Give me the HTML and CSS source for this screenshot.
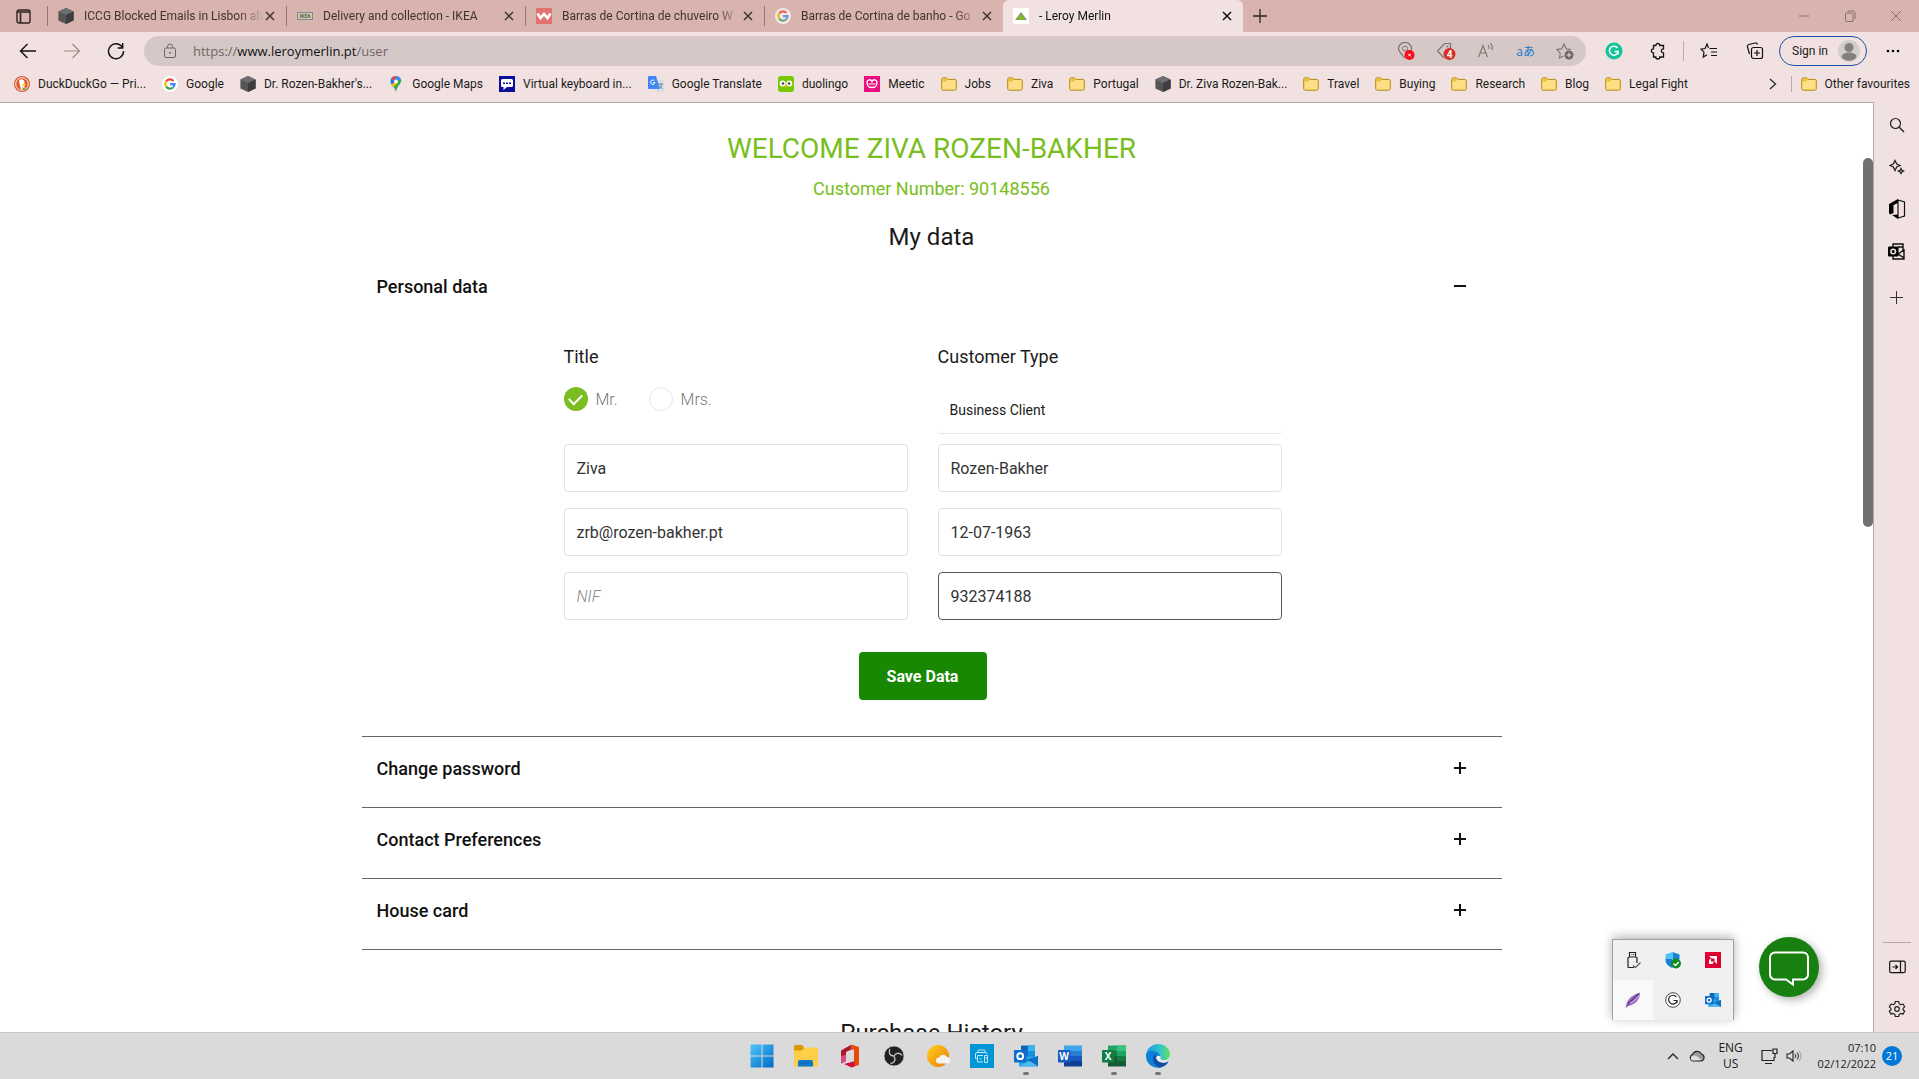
FILE: index.html
```html
<!DOCTYPE html>
<html lang="en">
<head>
<title>- Leroy Merlin</title>
<meta charset="UTF-8">
<meta name="viewport" content="width=device-width, initial-scale=1">
<link rel="stylesheet" href="styles.css">
</head>

<body>
    <!-- shared icons -->
    <svg class="defs" aria-hidden="true">
      <symbol id="folder" viewBox="0 0 16 16"><path d="M.7 3.500a1.600 1.600 0 0 1 1.600-1.700h3.200l1.600 1.600h6.600a1.600 1.600 0 0 1 1.600 1.600v7.600a1.600 1.600 0 0 1-1.600 1.600H2.300a1.600 1.600 0 0 1-1.600-1.600z" fill="#ffdf85" stroke="#b58a0f"/><path d="M1.200 5.600V3.400a1 1 0 0 1 1-1.100h3l1.300 1.500-1.600 1.800z" fill="#eac03a"/></symbol>
      <symbol id="cube" viewBox="0 0 16 16"><path d="M8 0l7.600 3.400v9L8 16 .4 12.400v-9z" fill="#555"/><path d="M8 0l7.600 3.400L8 7 .4 3.400z" fill="#6d6e70"/><path d="M8 7l7.600-3.600v9L8 16z" fill="#3c3d3f"/></symbol>
      <symbol id="google" viewBox="0 0 16 16"><circle cx="8" cy="8" r="8" fill="#fff"/><g fill="none" stroke-width="2.200"><path d="M4.200 5.400A4.600 4.600 0 0 1 11.400 4.900" stroke="#ea4335"/><path d="M4.200 10.600a4.600 4.600 0 0 1 0-5.200" stroke="#fbbc05"/><path d="M11 11.500a4.600 4.600 0 0 1-6.800-.9" stroke="#34a853"/><path d="M8 8.100h4.600a4.600 4.600 0 0 1-1.600 3.400" stroke="#4285f4"/></g></symbol>
      <symbol id="close" viewBox="0 0 10 10"><path d="M1 1l8 8M9 1L1 9" stroke="currentColor" stroke-width="1.500"/></symbol>
      <symbol id="outlook" viewBox="0 0 24 24"><path d="M7 1.500h14v9H7z" fill="#1066b5"/><path d="M14 1.500h7v6h-7z" fill="#35b8f1"/><path d="M7 7.500h7v6H7z" fill="#0f78d4"/><path d="M14 7.500h7v6h-7z" fill="#1490df"/><path d="M5 12l18.500 1v9.500H5z" fill="#28a8ea"/><path d="M24 12v10.500L12 16z" fill="#1a73c0"/><path d="M5 22.500L23 13v9.500z" fill="#50b9f0"/><path d="M24 12v10L14 16z" fill="#0f6fc0"/><rect y="6" width="12.500" height="12.500" rx="1" fill="#0f6cc8"/><circle cx="6.200" cy="12.200" r="2.900" fill="none" stroke="#fff" stroke-width="2"/></symbol>
    </svg>

    <!-- tab strip -->
    <div class="tabstrip">
      <button class="tab-actions" aria-label="Tab actions"><svg width="15" height="15" viewBox="0 0 15 15"><rect x="1" y="1" width="13" height="13" rx="2" fill="none" stroke="#2b2220" stroke-width="1.400"/><path d="M1 3h13M4.500 4v10" stroke="#2b2220" stroke-width="1.600"/></svg></button>
      <div class="tab"><svg class="ico"><use href="#cube"/></svg><span>ICCG Blocked Emails in Lisbon ab</span><button aria-label="Close tab"><svg width="10" height="10"><use href="#close"/></svg></button></div>
      <div class="tab"><svg class="ico" viewBox="0 0 16 16"><rect x=".5" y="4.500" width="15" height="7" fill="#e6c77c" stroke="#6d8cb5"/><text x="8" y="10" class="ikea">IKEA</text></svg><span>Delivery and collection - IKEA</span><button aria-label="Close tab"><svg width="10" height="10"><use href="#close"/></svg></button></div>
      <div class="tab"><svg class="ico" viewBox="0 0 16 16"><path fill="#e0736e" d="M0 0h16v16H0z"/><path d="M1.500 5.500l3 4.500L8 6l3.500 4 3-4.500" fill="none" stroke="#fff" stroke-width="2.600"/></svg><span>Barras de Cortina de chuveiro W</span><button aria-label="Close tab"><svg width="10" height="10"><use href="#close"/></svg></button></div>
      <div class="tab"><svg class="ico faded"><use href="#google"/></svg><span>Barras de Cortina de banho - Go</span><button aria-label="Close tab"><svg width="10" height="10"><use href="#close"/></svg></button></div>
      <div class="tab active"><svg class="ico" viewBox="0 0 16 16"><path fill="#fff" d="M0 0h16v16H0z"/><path d="M8 4l6 8H2z" fill="#8a8f7c"/><path d="M8 6l4.500 5.500h-9z" fill="#78be20"/></svg><span>- Leroy Merlin</span><button aria-label="Close tab"><svg width="10" height="10"><use href="#close"/></svg></button></div>
      <button class="new-tab" aria-label="New tab"><svg width="14" height="14" viewBox="0 0 14 14"><path d="M7 0v14M0 7h14" stroke="#2b2220" stroke-width="1.300"/></svg></button>
      <div class="window-buttons">
        <button aria-label="Minimise"><svg width="12" height="12" viewBox="0 0 12 12"><path d="M1 6h10" stroke="#85706c"/></svg></button>
        <button aria-label="Restore"><svg width="12" height="12" viewBox="0 0 12 12"><path d="M1.500 4a1 1 0 0 1 1-1H8a1 1 0 0 1 1 1v6.500a1 1 0 0 1-1 1H2.500a1 1 0 0 1-1-1zM3.500 1H9a2 2 0 0 1 2 2v6" fill="none" stroke="#85706c"/></svg></button>
        <button aria-label="Close"><svg width="12" height="12" viewBox="0 0 12 12"><path d="M1 1l10 10M11 1L1 11" stroke="#85706c"/></svg></button>
      </div>
    </div>

    <!-- address bar -->
    <div class="toolbar">
      <div class="nav-buttons">
        <button aria-label="Back"><svg width="18" height="16" viewBox="0 0 18 16"><path d="M17 8H2M8.500 1L1.500 8l7 7" fill="none" stroke="#111" stroke-width="1.400"/></svg></button>
        <button aria-label="Forward"><svg width="18" height="16" viewBox="0 0 18 16"><path d="M1 8h15M9.500 1l7 7-7 7" fill="none" stroke="#9b8b8a" stroke-width="1.200"/></svg></button>
        <button aria-label="Refresh"><svg width="18" height="18" viewBox="0 0 18 18"><path d="M15.500 5.500A7.500 7.500 0 1 0 16.500 9M15.700 1v5h-5" fill="none" stroke="#111" stroke-width="1.400"/></svg></button>
      </div>
      <div class="address">
        <svg width="14" height="16" viewBox="0 0 14 16"><rect x="1.500" y="5" width="11" height="9.500" rx="1.500" fill="none" stroke="#6f6564"/><path d="M4.500 5V3.500a2.500 2.500 0 0 1 5 0V5" fill="none" stroke="#6f6564"/><circle cx="7" cy="9.800" r="1" fill="#6f6564"/></svg>
        <a class="url" href="#">https://<b>www.leroymerlin.pt</b>/user</a>
        <div class="address-icons">
          <button aria-label="Location blocked"><svg width="18" height="18" viewBox="0 0 18 18"><path d="M8 16C4 12 1.500 9.500 1.500 6.500a6.500 6 0 0 1 13 0c0 1.500-.5 2.500-1.500 4" fill="none" stroke="#81716f" stroke-width="1.200"/><circle cx="8" cy="6.500" r="2.500" fill="none" stroke="#81716f"/><circle cx="12.500" cy="13" r="5" fill="#f80a14"/><path d="M11 11.500l3 3m0-3l-3 3" stroke="#fff"/></svg></button>
          <button aria-label="Shopping"><svg width="20" height="18" viewBox="0 0 20 18"><path d="M14.500 8V1.500H8.500L1.500 9l6.500 7" fill="none" stroke="#81716f" stroke-width="1.200"/><circle cx="11.500" cy="4.500" r="1" fill="#81716f"/><circle cx="13.500" cy="12" r="6" fill="#d92d20"/><text x="13.500" y="15.500" class="badge-text">4</text></svg></button>
          <button aria-label="Read aloud"><svg width="18" height="18" viewBox="0 0 18 18"><path d="M1.500 15L6 3.500 10.500 15M3 11h6M11 3a5 5 0 0 1 1 4M13.500 1a8 8 0 0 1 1.500 7" fill="none" stroke="#81716f" stroke-width="1.100"/></svg></button>
          <button class="translate" aria-label="Translate">aあ</button>
          <button aria-label="Add to favourites"><svg width="18" height="18" viewBox="0 0 18 18"><path d="M7.500 14L3.500 16l.8-4.700L1 7.500l4.700-.6L8 2l2.300 4.900 4.700.6" fill="none" stroke="#81716f" stroke-width="1.100"/><circle cx="13" cy="13" r="4.500" fill="#6f6564"/><path d="M13 10.500v5M10.500 13h5" stroke="#e8dedd"/></svg></button>
        </div>
      </div>
      <div class="tools">
        <button aria-label="Grammarly"><svg width="18" height="18" viewBox="0 0 18 18"><circle cx="9" cy="9" r="8.500" fill="#15c39a"/><path d="M12.500 6A4.500 4.500 0 1 0 13 10.500M9.500 9.500H13v3" fill="none" stroke="#fff" stroke-width="1.500"/></svg></button>
        <button aria-label="Extensions"><svg width="18" height="18" viewBox="0 0 18 18"><path d="M4.500 3.500h2.300a2 2 0 0 1 4 0h3.700v3.300a2.100 2.100 0 0 0 0 4.200V15h-3.700a2 2 0 0 1-4 0H4.500v-4a2.100 2.100 0 0 1 0-4.200z" fill="none" stroke="#111" stroke-width="1.300"/></svg></button>
        <button class="divided" aria-label="Favourites"><svg width="18" height="18" viewBox="0 0 18 18"><path d="M9.500 6.500H17M11 10h6M11 13.500h6M8.500 6L7 2 5 6.500l-4 .6 3 3L3.300 15 7 12.700" fill="none" stroke="#111" stroke-width="1.200"/></svg></button>
        <button aria-label="Collections"><svg width="18" height="18" viewBox="0 0 18 18"><rect x="5.500" y="5.500" width="11" height="11" rx="2" fill="none" stroke="#111" stroke-width="1.200"/><path d="M11 8v6M8 11h6M3.500 12L1.500 5a2 2 0 0 1 1.500-2.500L9 1a2 2 0 0 1 2.500 1.500" fill="none" stroke="#111" stroke-width="1.200"/></svg></button>
      </div>
      <button class="sign-in">Sign in <svg width="22" height="22" viewBox="0 0 22 22"><circle cx="11" cy="11" r="11" fill="#d1cecb"/><circle cx="11" cy="7.500" r="4.500" fill="#84807d"/><path d="M3.500 17c0-6 15-6 15 0-3 5-12 5-15 0z" fill="#84807d"/></svg></button>
      <button class="more" aria-label="Settings and more"><svg width="14" height="4" viewBox="0 0 14 4"><circle cx="2" cy="2" r="1.300"/><circle cx="7" cy="2" r="1.300"/><circle cx="12" cy="2" r="1.300"/></svg></button>
    </div>

    <!-- favourites bar -->
    <div class="favourites">
      <a href="#"><svg class="ico" viewBox="0 0 16 16"><circle cx="8" cy="8" r="8" fill="#de5833"/><circle cx="8" cy="8" r="6.300" fill="none" stroke="#fff" stroke-width=".9"/><path d="M5 5c1-3 6-2 5.500 2v6.500H7z" fill="#fff"/><path d="M8.500 8h4l-2 2h-2z" fill="#fdd20a"/><path d="M8 11l4 2-3 1.500z" fill="#4cba3c"/></svg>DuckDuckGo — Pri...</a>
      <a href="#"><svg class="ico"><use href="#google"/></svg>Google</a>
      <a href="#"><svg class="ico"><use href="#cube"/></svg>Dr. Rozen-Bakher's...</a>
      <a href="#"><svg class="ico" viewBox="0 0 16 16"><path d="M3 2.500A5.500 5.500 0 0 1 8 0v6z" fill="#ea4335"/><path d="M8 0a5.500 5.500 0 0 1 5 3L7 9 6 6z" fill="#4285f4"/><path d="M2.500 6a5.500 5.500 0 0 1 .8-3.700L7 5.500 3.800 9z" fill="#1a73e8"/><path d="M3.500 9L13 3c1.500 4-3.700 6-5 13-.8-3.500-2.500-5-4.500-7z" fill="#34a853"/><path d="M3.500 9l4.200-4.500L9.500 7 5.500 11z" fill="#fbbc04"/><circle cx="8" cy="5.500" r="1.900" fill="#fff"/></svg>Google Maps</a>
      <a href="#"><svg class="ico" viewBox="0 0 16 16"><path fill="#0a0f9b" d="M0 0h16v16H0z"/><path d="M3.500 3h9a1.500 1.500 0 0 1 1.500 1.500v5a1.500 1.500 0 0 1-1.500 1.500H8l-3.500 3V11h-1A1.500 1.500 0 0 1 2 9.500v-5A1.500 1.500 0 0 1 3.500 3z" fill="#fff"/><path d="M4 6.500h2v1.500H4zM7 6.500h2v1.500H7zM10 6.500h2v1.500h-2z" fill="#0a0f9b"/></svg>Virtual keyboard in...</a>
      <a href="#"><svg class="ico" viewBox="0 0 16 16"><path d="M6 4h9a1 1 0 0 1 1 1v10a1 1 0 0 1-1 1H9z" fill="#d9dde3"/><path d="M1 0h7l4 13H1a1 1 0 0 1-1-1V1a1 1 0 0 1 1-1z" fill="#4285f4"/><path d="M6.500 4.800A2.200 2.200 0 1 0 7 6.500H5" fill="none" stroke="#fff"/><path d="M10 8h5M12.500 7v1M14 8c0 2-2 4-3 4.500M11.500 9.500l3 3.500" fill="none" stroke="#6a8aa0"/></svg>Google Translate</a>
      <a href="#"><svg class="ico" viewBox="0 0 16 16"><rect width="16" height="16" rx="3" fill="#78c800"/><circle cx="4.700" cy="7.500" r="3" fill="#fff"/><circle cx="11.300" cy="7.500" r="3" fill="#fff"/><circle cx="5" cy="7.500" r="1.300" fill="#444"/><circle cx="11" cy="7.500" r="1.300" fill="#444"/><path d="M6.500 9.500h3L8 12z" fill="#f5a623"/></svg>duolingo</a>
      <a href="#"><svg class="ico" viewBox="0 0 16 16"><path fill="#ea0f7d" d="M0 0h16v16H0z"/><path d="M3 7c0 6 10 6 10 0 0-4-4-4-5-1.500C7 3 3 3 3 7z" fill="none" stroke="#fff" stroke-width="1.300"/><path d="M4.500 8h7" stroke="#fff"/></svg>Meetic</a>
      <a href="#"><svg class="ico"><use href="#folder"/></svg>Jobs</a>
      <a href="#"><svg class="ico"><use href="#folder"/></svg>Ziva</a>
      <a href="#"><svg class="ico"><use href="#folder"/></svg>Portugal</a>
      <a href="#"><svg class="ico"><use href="#cube"/></svg>Dr. Ziva Rozen-Bak...</a>
      <a href="#"><svg class="ico"><use href="#folder"/></svg>Travel</a>
      <a href="#"><svg class="ico"><use href="#folder"/></svg>Buying</a>
      <a href="#"><svg class="ico"><use href="#folder"/></svg>Research</a>
      <a href="#"><svg class="ico"><use href="#folder"/></svg>Blog</a>
      <a href="#"><svg class="ico"><use href="#folder"/></svg>Legal Fight</a>
      <div class="favourites-end">
        <button aria-label="More favourites"><svg width="8" height="12" viewBox="0 0 8 12"><path d="M1 1l5.500 5L1 11" fill="none" stroke="#333" stroke-width="1.400"/></svg></button>
        <a href="#"><svg class="ico"><use href="#folder"/></svg>Other favourites</a>
      </div>
    </div>

    <div class="browser">
      <div class="page">
        <main class="container">
          <h1>WELCOME ZIVA ROZEN-BAKHER</h1>
          <p class="customer">Customer Number: 90148556</p>
          <h2>My data</h2>

          <section class="panel">
            <h3><button class="panel-title">Personal data <svg width="14" height="14" viewBox="0 0 14 14"><path d="M1 7h12" stroke="#111" stroke-width="2"/></svg></button></h3>
            <form class="data-form">
              <fieldset>
                <legend>Title</legend>
                <div class="radios">
                  <label><input type="radio" name="title" checked> Mr.</label>
                  <label><input type="radio" name="title"> Mrs.</label>
                </div>
              </fieldset>
              <div class="type">
                <label for="type">Customer Type</label>
                <select id="type"><option>Business Client</option></select>
              </div>
              <input type="text" aria-label="First name" value="Ziva">
              <input type="text" aria-label="Surname" value="Rozen-Bakher">
              <input type="text" aria-label="Email" value="zrb@rozen-bakher.pt">
              <input type="text" aria-label="Birth date" value="12-07-1963">
              <input type="text" aria-label="NIF" placeholder="NIF">
              <input type="text" aria-label="Phone" class="current" value="932374188">
              <button class="save" type="button">Save Data</button>
            </form>
          </section>
          <section class="panel">
            <h3><button class="panel-title">Change password <svg width="14" height="14" viewBox="0 0 14 14"><path d="M1 7h12M7 1v12" stroke="#111" stroke-width="2"/></svg></button></h3>
          </section>
          <section class="panel">
            <h3><button class="panel-title">Contact Preferences <svg width="14" height="14" viewBox="0 0 14 14"><path d="M1 7h12M7 1v12" stroke="#111" stroke-width="2"/></svg></button></h3>
          </section>
          <section class="panel">
            <h3><button class="panel-title">House card <svg width="14" height="14" viewBox="0 0 14 14"><path d="M1 7h12M7 1v12" stroke="#111" stroke-width="2"/></svg></button></h3>
          </section>

          <h2 class="history">Purchase History</h2>
        </main>
        <div class="scrollbar"></div>
        <button class="chat" aria-label="Chat"><svg width="40" height="36" viewBox="0 0 40 36"><path d="M6 1.500h28a5 5 0 0 1 5 5v17a5 5 0 0 1-5 5H24v5l-7-5H6a5 5 0 0 1-5-5v-17a5 5 0 0 1 5-5z" fill="none" stroke="#fff" stroke-width="2"/></svg></button>
        <!-- hidden tray icons -->
        <div class="tray-popup">
          <button aria-label="USB"><svg width="16" height="18" viewBox="0 0 16 18"><path d="M4.500 6V1.500h6V6M3 16.500V7a1 1 0 0 1 1-1h7a1 1 0 0 1 1 1v5M3 16.500h6" fill="none" stroke="#222" stroke-width="1.200"/><path d="M6.500 3.500h.8M8.200 3.500H9" stroke="#222"/><path d="M8 14.500l2.500 2 5-5" fill="none" stroke="#555" stroke-width="1.200"/></svg></button>
          <button aria-label="Security"><svg width="16" height="17" viewBox="0 0 16 17"><path d="M7.500 0v16c-3-1-7-4-7-8V7h14V2.500z" fill="#1581d8"/><path d="M7.500 7h7v1c0 4-4 7-7 8z" fill="#4db4ee"/><path d="M.5 2.500L7.500 0v7h-7z" fill="#50c4f5"/><circle cx="11" cy="11.500" r="5" fill="#128a22"/><path d="M8.500 11.500l2 2 3.300-3.500" fill="none" stroke="#fff" stroke-width="1.300"/></svg></button>
          <button aria-label="AMD"><svg width="16" height="16" viewBox="0 0 16 16"><path fill="#dd0031" d="M0 0h16v16H0z"/><path d="M4 4h8v8L9.500 9.500v-3h-3zM4 8l2-1.500v3h3L7.500 12H4z" fill="#fff"/></svg></button>
          <button class="lit" aria-label="Feather"><svg width="16" height="16" viewBox="0 0 16 16"><path d="M1 15C1 8 7 3 15 .5 15 8 10 13 2.500 14z" fill="#9a6cc4"/><path d="M1 15.500C5 10 9 6 14 2M3 11c4-3 6-5 10-9" fill="none" stroke="#4f2a78" stroke-width=".9"/><path d="M5 11c4-1 6-4 9-8" fill="none" stroke="#d9c3ee" stroke-width=".9"/></svg></button>
          <button aria-label="Grammarly"><svg width="16" height="16" viewBox="0 0 16 16"><circle cx="8" cy="8" r="7.300" fill="#fff" stroke="#333" stroke-width=".9"/><path d="M11.500 5A4.400 4.400 0 1 0 12 9.500M8.500 8.500H12V11" fill="none" stroke="#222" stroke-width="1.200"/></svg></button>
          <button aria-label="Outlook"><svg width="16" height="16"><use href="#outlook"/></svg></button>
        </div>
      </div>

      <aside class="sidebar">
        <button aria-label="Search"><svg width="16" height="16" viewBox="0 0 16 16"><circle cx="6.500" cy="6.500" r="5" fill="none" stroke="#222" stroke-width="1.200"/><path d="M10.200 10.200L15 15" stroke="#222" stroke-width="1.400"/></svg></button>
        <button aria-label="Discover"><svg width="16" height="16" viewBox="0 0 16 16"><path d="M6 1.500L7.700 5 11 6.500 7.700 8 6 11.500 4.300 8 1 6.500 4.300 5zM12 9.500l.9 1.700 1.700.9-1.700.9L12 14.500l-.9-1.500-1.700-.9 1.700-.9z" fill="none" stroke="#222" stroke-width="1.300"/></svg></button>
        <button aria-label="Office"><svg width="18" height="20" viewBox="0 0 18 20"><path d="M10 1l6.500 2v14L10 19z" fill="none" stroke="#111" stroke-width="1.200"/><path d="M10 0v4L5.500 6v8L2 15.500 1 14V5zM4 16l6-.5V20z" fill="#000"/></svg></button>
        <button aria-label="Outlook"><svg width="17" height="17" viewBox="0 0 17 17"><path d="M5 4V1h10v6M5 13v3h11V7l-6 4 6 4M10 4h5" fill="none" stroke="#111" stroke-width="1.400"/><rect y="3.500" width="10.500" height="10" rx="1"/><circle cx="5.200" cy="8.500" r="2.300" fill="none" stroke="#f1e2e1" stroke-width="1.500"/></svg></button>
        <button class="add" aria-label="Add"><svg width="13" height="13" viewBox="0 0 13 13"><path d="M6.500 0v13M0 6.500h13" stroke="#333"/></svg></button>
        <div class="sidebar-end">
          <button aria-label="Hide sidebar"><svg width="17" height="14" viewBox="0 0 17 14"><rect x=".7" y="1.200" width="15.500" height="11.500" rx="1.500" fill="none" stroke="#111" stroke-width="1.200"/><path d="M11.500 1v12M3.500 7h5M6.500 5l2 2-2 2" fill="none" stroke="#111" stroke-width="1.200"/></svg></button>
          <button aria-label="Settings"><svg width="18" height="18" viewBox="0 0 18 18"><path d="M7.300 1.500h3.400l.5 2.300 1.600.9 2.200-.7 1.700 2.900L15 8.400v1.300l1.700 1.500L15 14.100l-2.200-.7-1.600.9-.5 2.200H7.300l-.5-2.200-1.600-.9-2.200.7-1.700-2.900L3 9.700V8.400L1.300 6.900 3 4l2.200.7 1.600-.9z" fill="none" stroke="#222" stroke-width="1.200" stroke-linejoin="round"/><circle cx="9" cy="9" r="2.300" fill="none" stroke="#222" stroke-width="1.200"/></svg></button>
        </div>
      </aside>
    </div>

    <!-- windows taskbar -->
    <footer class="taskbar">
      <div class="apps">
        <button aria-label="Start"><svg width="24" height="24" viewBox="0 0 24 24"><defs><linearGradient id="win" x2="1" y2="1"><stop stop-color="#4cc9f8"/><stop offset="1" stop-color="#0067c8"/></linearGradient></defs><path d="M.5.500h11v11H.5zM12.500.500h11v11h-11zM.5 12.500h11v11H.5zM12.500 12.500h11v11h-11z" fill="url(#win)"/></svg></button>
        <button aria-label="Files"><svg width="24" height="24" viewBox="0 0 24 24"><path d="M0 2a1 1 0 0 1 1-1h7l2 2.500V8H0z" fill="#d99a05"/><path d="M0 6.500h8L10.500 3.500H24v19H0z" fill="#fdcf48"/><path d="M4 22.500V18a2 2 0 0 1 2-2h11a2 2 0 0 1 2 2v4.500z" fill="#0f79cc"/><path d="M7 19h9" stroke="#0a5ca5"/></svg></button>
        <button aria-label="Office"><svg width="24" height="24" viewBox="0 0 24 24"><path d="M3 6.500L13.500.500v5L8 8v9l-4.500 2.500L3 18z" fill="#b0182c"/><path d="M3 12v6l.7 1.300L8 17v-6z" fill="#d84a86"/><path d="M13.500.500L21 3v18l-7.500 2.500V18l2.500-.5v-12l-2.500.500z" fill="#e64a0c"/><path d="M6 20l7.500-2 3-.5v5l-3 1z" fill="#d0103c"/></svg></button>
        <button aria-label="OBS"><svg width="22" height="22" viewBox="0 0 22 22"><circle cx="11" cy="11" r="10" fill="#201f22" stroke="#c8c8c8" stroke-width=".8"/><path d="M11 11C6 11 5.500 6.500 7 4M11 11c2.500-4 6.500-3 8-.5M11 11c2.500 4.500-.5 7.500-3.500 7.500" fill="none" stroke="#bdbdbd" stroke-width="1.400"/></svg></button>
        <button aria-label="Weather"><svg width="24" height="24" viewBox="0 0 24 24"><defs><linearGradient id="sun" x2="1" y2="1"><stop stop-color="#ffd21a"/><stop offset="1" stop-color="#ee7a08"/></linearGradient></defs><circle cx="12" cy="12" r="11" fill="url(#sun)"/><path d="M13 19.500a3 3 0 0 1 0-6 4.500 4.500 0 0 1 8-.5 3 3 0 0 1 0 6.500z" fill="#f4f4f4"/></svg></button>
        <button aria-label="Printer"><svg width="24" height="24" viewBox="0 0 24 24"><path fill="#0096d6" d="M0 0h24v24H0z"/><path d="M7.500 8.500l1-2.500h6l1 2.500M7 14.500H5.500V10A1.500 1.500 0 0 1 7 8.500h8.500a1.500 1.500 0 0 1 1.500 1.500M13 11.500H7.500v6.500H13M9.500 15h2M14.500 11.500h3v7h-3zM14.500 14h3" fill="none" stroke="#bfe7f8"/></svg></button>
        <button class="running" aria-label="Outlook"><svg width="24" height="24"><use href="#outlook"/></svg></button>
        <button aria-label="Word"><svg width="24" height="24" viewBox="0 0 24 24"><path d="M6 1.500h18v6H6z" fill="#41a5ee"/><path d="M6 7h18v5.500H6z" fill="#2b7cd3"/><path d="M6 12h18v5.500H6z" fill="#185abd"/><path d="M6 17h18v5.500H6z" fill="#103f91"/><rect y="6" width="12.500" height="12.500" rx="1" fill="#185abd"/><text x="6.200" y="16" class="app-letter">W</text></svg></button>
        <button class="running" aria-label="Excel"><svg width="24" height="24" viewBox="0 0 24 24"><path d="M6 1.500h18v6H6z" fill="#21a366"/><path d="M15 1.500h9v6h-9z" fill="#33c481"/><path d="M6 7h18v5.500H6z" fill="#107c41"/><path d="M15 7h9v5.500h-9z" fill="#21a366"/><path d="M6 12h18v5.500H6z" fill="#185c37"/><path d="M15 12h9v5.500h-9z" fill="#107c41"/><path d="M6 17h18v5.500H6z" fill="#185c37"/><rect y="6" width="12.500" height="12.500" rx="1" fill="#107c41"/><text x="6.200" y="16" class="app-letter">X</text></svg></button>
        <button class="running" aria-label="Edge"><svg width="24" height="24" viewBox="0 0 24 24"><defs><linearGradient id="edge" x2="1"><stop stop-color="#1a9be0"/><stop offset=".6" stop-color="#32c6c8"/><stop offset="1" stop-color="#69df59"/></linearGradient></defs><path d="M0 12A12 12 0 0 1 12 0c7 0 12 5 12 10 0 4-3 6-6 6s-4.500-1-3.500-2.500S15 9 10 8 1 9 0 12z" fill="url(#edge)"/><path d="M0 12c0-4 4-6 8-5s7 3 7 6c-1-2-6-1-6 3s4 7 8 6.500C11 26 0 22 0 12z" fill="#0c7fd9"/><path d="M9.500 10C5 13 7 21 13 23.500c4 0 8-2.500 9.500-6-6 3-12 0-12.500-4z" fill="#0d4fa5"/><path d="M10.500 13c1-2 4-1.500 4 0-1 2 0 4 4 4 2 0 3-.5 4-1-3 4-12 3-12-3z" fill="#e6edf2"/></svg></button>
      </div>
      <div class="tray">
        <button class="chevron" aria-label="Show hidden icons"><svg width="12" height="8" viewBox="0 0 12 8"><path d="M1 7l5-5 5 5" fill="none" stroke="#222" stroke-width="1.300"/></svg></button>
        <button aria-label="OneDrive"><svg width="16" height="12" viewBox="0 0 16 12"><path d="M4 11a3.400 3.400 0 0 1-.5-6.500 5 5 0 0 1 9-.5A3.600 3.600 0 0 1 12 11z" fill="#999" stroke="#222" stroke-width="1.100"/><path d="M4 10.500a2 2 0 0 1 0-4.500c2-1 3 0 5 1l4 3z" fill="#ddd"/></svg></button>
        <button class="lang">ENG<br>US</button>
        <button aria-label="Network"><svg width="17" height="17" viewBox="0 0 17 17"><path d="M11 2.500H1v10h12V9M4 15.500h7" fill="none" stroke="#222" stroke-width="1.200"/><path d="M12 1h4v4.500h-4zM14 5.500V10" fill="none" stroke="#222" stroke-width="1.200"/></svg></button>
        <button aria-label="Volume"><svg width="16" height="14" viewBox="0 0 16 14"><path d="M1 5h2.500L7 2v10L3.500 9H1z" fill="none" stroke="#222" stroke-width="1.100"/><path d="M9 5a3 3 0 0 1 0 4M11 3.500a5 5 0 0 1 0 7" fill="none" stroke="#222"/><path d="M13 2a7 7 0 0 1 0 10" fill="none" stroke="#999"/></svg></button>
        <button class="clock">07:10<br>02/12/2022</button>
        <span class="count">21</span>
      </div>
    </footer>
</body>
</html>
```
FILE: styles.css
```css
* {
  box-sizing: border-box;
}
body {
  margin: 0;
  height: 100vh;
  display: flex;
  flex-direction: column;
  overflow: hidden;
  background-color: #f1e2e1;
  font-family: Roboto, sans-serif;
  font-size: 12px;
  color: #1b1b1b;
}
button {
  display: flex;
  align-items: center;
  justify-content: center;
  padding: 0;
  border: none;
  background: none;
  font: inherit;
  color: inherit;
  cursor: pointer;
}
a {
  color: inherit;
  text-decoration: none;
}
svg {
  flex: none;
}
.defs {
  position: absolute;
  width: 0;
  height: 0;
}
.ico {
  width: 16px;
  height: 16px;
}
.faded {
  opacity: 0.7;
}

/* Tab strip */
.tabstrip {
  display: flex;
  height: 32px;
  background-color: #d9b3ad;
}
.tab-actions {
  width: 47px;
}
.tab {
  display: flex;
  align-items: center;
  gap: 10px;
  width: 239px;
  padding: 0 11px 0 10px;
  border-left: 1px solid #917874;
  border-image: linear-gradient(transparent 20%, #917874 20%, #917874 80%, transparent 80%) 1;
  color: #3f3331;
}
.tab span {
  flex: 1;
  margin-right: -8px;
  overflow: hidden;
  white-space: nowrap;
  -webkit-mask-image: linear-gradient(to right, #000 86%, transparent);
  mask-image: linear-gradient(to right, #000 86%, transparent);
}
.tab.active {
  width: 240px;
  border: none;
  border-radius: 6px 6px 0 0;
  background-color: #f1e2e1;
  color: #111;
}
.new-tab {
  width: 34px;
}
.window-buttons {
  display: flex;
  margin-left: auto;
}
.window-buttons button {
  width: 46px;
}
.ikea {
  font-size: 5px;
  font-weight: bold;
  fill: #3f6096;
  text-anchor: middle;
}

/* Address bar */
.toolbar {
  display: flex;
  align-items: center;
  height: 38px;
}
.nav-buttons {
  display: flex;
  width: 144px;
  padding-left: 6px;
}
.nav-buttons button {
  width: 44px;
}
.address {
  flex: 1;
  display: flex;
  align-items: center;
  gap: 16px;
  height: 30px;
  padding: 0 12px 0 19px;
  border-radius: 15px;
  background-color: #d6c8c7;
}
.url {
  font-family: "Open Sans", sans-serif;
  font-size: 13px;
  color: #6f6564;
}
.url b {
  font-weight: normal;
  color: #111;
}
.address-icons {
  display: flex;
  gap: 21px;
  margin-left: auto;
}
.translate {
  font-family: "Open Sans", "Noto Sans CJK JP", sans-serif;
  color: #1a78d0;
}
.badge-text {
  font-size: 10px;
  font-weight: bold;
  fill: #fff;
  text-anchor: middle;
}
.tools {
  display: flex;
  height: 20px;
  margin: 0 2px 0 6px;
}
.tools button {
  width: 44px;
}
.tools .divided {
  width: 50px;
  margin-left: 3px;
  border-left: 1px solid #b9abaa;
}
.sign-in {
  gap: 10px;
  width: 88px;
  height: 30px;
  padding-left: 6px;
  border: 1px solid #1f4fa8;
  border-radius: 15px;
}
.more {
  width: 52px;
}

/* Favourites bar */
.favourites {
  display: flex;
  align-items: center;
  gap: 16px;
  height: 32px;
  padding: 0 9px 4px 14px;
  white-space: nowrap;
}
.favourites a {
  display: flex;
  align-items: center;
  gap: 8px;
}
.favourites-end {
  display: flex;
  gap: 14px;
  margin-left: auto;
}
.favourites-end a {
  padding-left: 9px;
  border-left: 1px solid #b9abaa;
}

/* Web page */
.browser {
  flex: 1;
  min-height: 0;
  display: flex;
}
.page {
  position: relative;
  flex: 1;
  overflow: hidden;
  padding-right: 10px;
  border-top: 1px solid #b5a9a8;
  border-right: 1px solid #b5a9a8;
  background-color: #fff;
  font-size: 16px;
}
.container {
  max-width: 1140px;
  margin: 0 auto;
  padding-top: 26px;
}
h1, h2, h3, .customer {
  margin: 0;
  font-weight: normal;
  text-align: center;
}
h1 {
  font-size: 28px;
  line-height: 40px;
  color: #78be20;
}
.customer {
  margin-top: 8px;
  font-size: 18px;
  line-height: 24px;
  color: #78be20;
}
h2 {
  margin: 20px 0 2px;
  font-size: 24px;
  line-height: 32px;
}
.panel {
  border-bottom: 1px solid #666;
}
.panel-title {
  justify-content: space-between;
  width: 100%;
  height: 70px;
  padding: 0 35px 8px 15px;
  font-size: 18px;
  font-weight: 500;
  color: #111;
}
.data-form {
  display: grid;
  grid-template-columns: 1fr 1fr;
  gap: 16px 30px;
  max-width: 718px;
  margin: 18px auto 36px 202px;
}
fieldset {
  margin: 0;
  padding: 0;
  border: none;
}
legend, .type label {
  display: block;
  padding: 0;
  font-size: 18px;
  line-height: 28px;
}
.radios {
  display: flex;
  gap: 31px;
  padding-top: 16px;
}
.radios label {
  display: flex;
  align-items: center;
  gap: 8px;
  font-weight: 300;
  color: #777;
}
.radios input {
  appearance: none;
  width: 24px;
  height: 24px;
  margin: 0;
  border: 1px solid #e6e6e6;
  border-radius: 50%;
}
.radios input:checked {
  display: grid;
  place-items: center;
  border: none;
  background-color: #78be20;
}
.radios input:checked::before {
  content: "";
  width: 11px;
  height: 6px;
  margin-bottom: 3px;
  border: solid #fff;
  border-width: 0 0 2px 2px;
  transform: rotate(-45deg);
}
.type select {
  appearance: none;
  width: 100%;
  height: 48px;
  margin-top: 15px;
  padding: 0 12px;
  border: none;
  border-bottom: 1px solid #e6e6e6;
  border-radius: 4px;
  background: none;
  font: inherit;
  font-size: 14px;
  color: #1b1b1b;
}
.type {
  margin-bottom: -6px;
}
.data-form input[type="text"] {
  height: 48px;
  padding: 0 12px;
  border: 1px solid #e2e2e2;
  border-radius: 4px;
  font: inherit;
  color: #333;
}
.data-form input::placeholder {
  font-weight: 300;
  font-style: italic;
  color: #888;
}
.data-form input.current {
  border-color: #555;
}
.save {
  grid-column: 1 / 3;
  justify-self: center;
  width: 128px;
  height: 48px;
  margin-top: 16px;
  border-radius: 4px;
  background-color: #188803;
  font-weight: bold;
  color: #fff;
}
.history {
  margin-top: 67px;
}
.scrollbar {
  position: absolute;
  top: 55px;
  right: 0;
  width: 10px;
  height: 369px;
  border-radius: 5px;
  background-color: #717171;
}
.chat {
  position: absolute;
  right: 54px;
  bottom: 35px;
  width: 60px;
  height: 60px;
  padding-top: 4px;
  border-radius: 50%;
  background-color: #188010;
  box-shadow: 3px 3px 8px rgba(0, 0, 0, 0.3);
}
.tray-popup {
  position: absolute;
  right: 139px;
  bottom: 12px;
  display: grid;
  grid-template-columns: repeat(3, 40px);
  grid-template-rows: 40px 40px;
  border: 1px solid #a0a0a0;
  border-bottom: none;
  background-color: #f0f0f0;
  box-shadow: 0 -2px 10px rgba(0, 0, 0, 0.3);
}
.tray-popup .lit {
  background-color: #f9f9f9;
}

/* Edge sidebar */
.sidebar {
  display: flex;
  flex-direction: column;
  width: 45px;
  padding-top: 2px;
}
.sidebar button {
  height: 42px;
}
.sidebar .add {
  margin-top: 4px;
}
.sidebar-end {
  display: flex;
  flex-direction: column;
  margin: auto 8px 2px 9px;
  border-top: 1px solid #b5a9a8;
  padding-top: 3px;
}

/* Windows taskbar */
.taskbar {
  display: grid;
  grid-template-columns: 1fr auto 1fr;
  height: 47px;
  border-top: 1px solid #c6c6c6;
  background-color: #dadada;
  font-family: "Open Sans", sans-serif;
}
.apps {
  grid-column: 2;
  display: flex;
}
.apps button {
  position: relative;
  width: 44px;
}
.running::after {
  content: "";
  position: absolute;
  bottom: 4px;
  width: 6px;
  height: 3px;
  border-radius: 2px;
  background-color: #777;
}
.app-letter {
  font-size: 10px;
  font-weight: bold;
  fill: #fff;
  text-anchor: middle;
}
.tray {
  display: flex;
  align-items: center;
  justify-content: flex-end;
  padding-right: 17px;
}
.tray button {
  line-height: 16px;
  margin-left: 8px;
}
.tray .chevron {
  margin-right: 2px;
}
.tray .lang {
  display: block;
  width: 36px;
  margin: 0 4px 0 8px;
  text-align: center;
}
.tray .clock {
  display: block;
  margin: 0 6px 0 16px;
  font-size: 11px;
  text-align: right;
}
.count {
  width: 20px;
  border-radius: 10px;
  background-color: #0078d7;
  color: #fff;
  font-size: 11px;
  line-height: 20px;
  text-align: center;
}
```
